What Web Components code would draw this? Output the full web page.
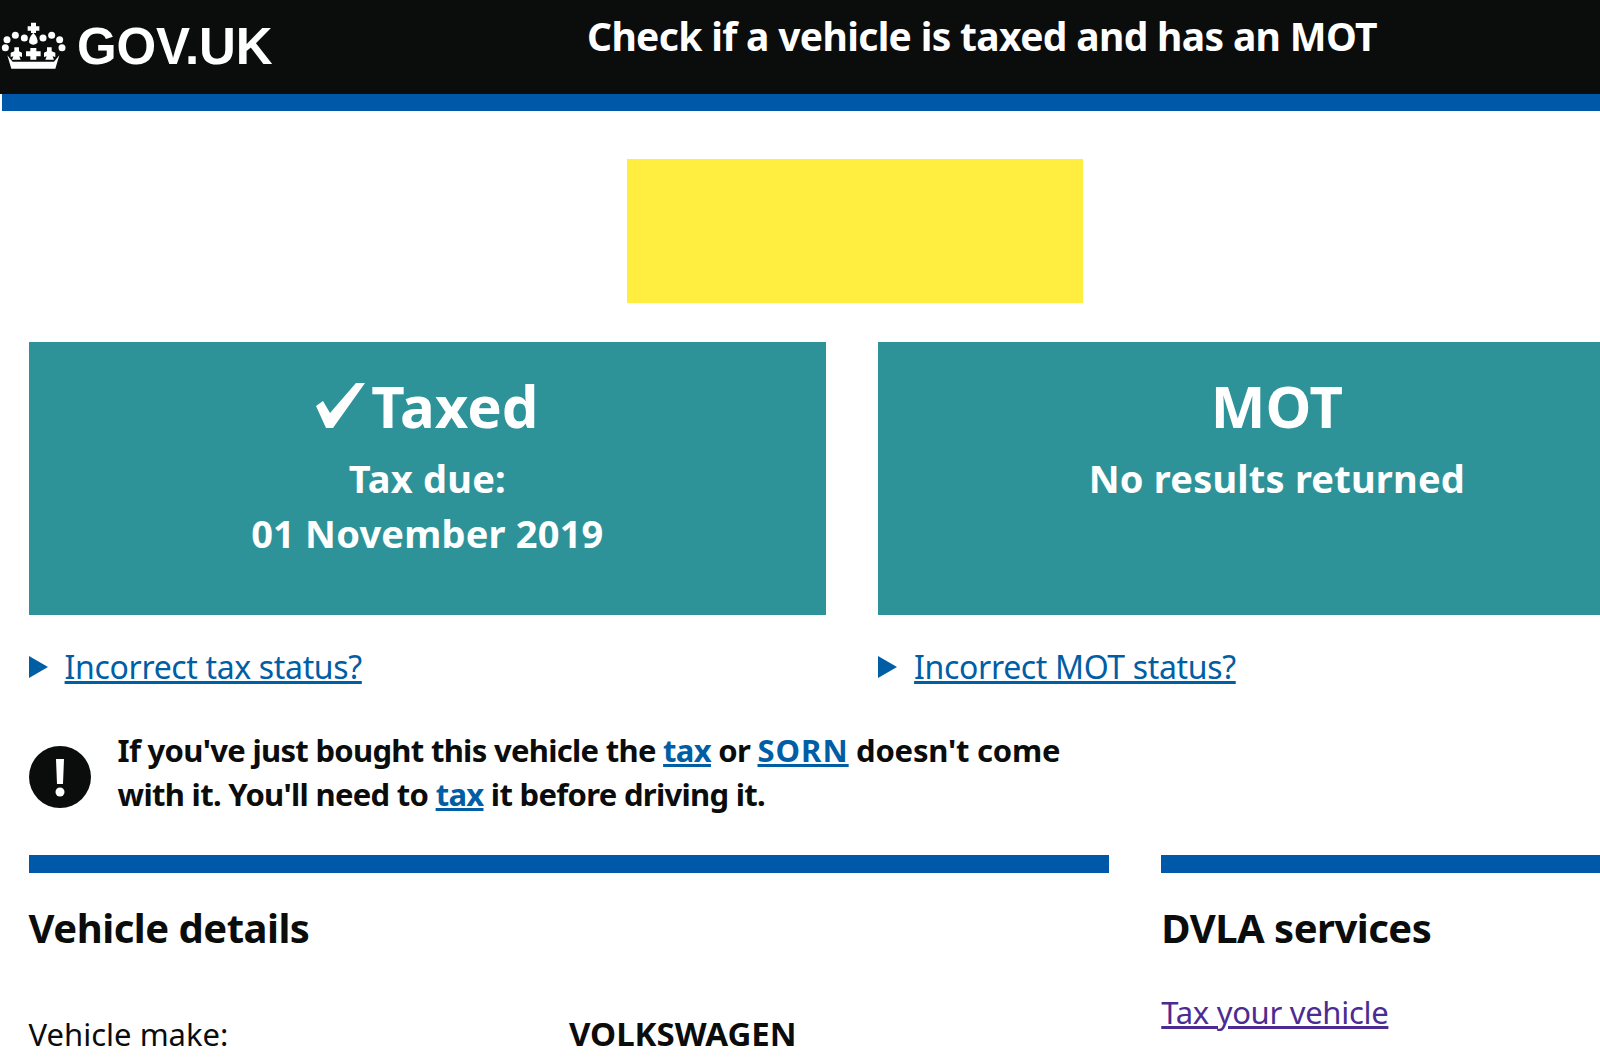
<!DOCTYPE html>
<html lang="en">
<head>
<meta charset="utf-8">
<title>Check if a vehicle is taxed and has an MOT</title>
<style>
  html, body { margin: 0; padding: 0; background: #fff; overflow: hidden; }
  body { font-family: "Noto Sans", Arial, sans-serif; color: #0b0c0c; }
  warning-note a { color: #005ea5; }
  warning-note a.caps { letter-spacing: 1px; }
</style>
</head>
<body>
<gov-header service="Check if a vehicle is taxed and has an MOT"></gov-header>
<vehicle-page>
  <number-plate slot="plate"></number-plate>

  <status-panel slot="status" heading="Taxed" checked link="Incorrect tax status?">
    <div>Tax due:</div>
    <div>01 November 2019</div>
  </status-panel>
  <status-panel slot="status" heading="MOT" link="Incorrect MOT status?">
    <div>No results returned</div>
  </status-panel>

  <warning-note slot="warning">
    If you've just bought this vehicle the <a href="#">tax</a> or <a class="caps" href="#">SORN</a> <span style="letter-spacing:-0.2px">doesn't come</span><br>
    with it. You'll need to <a href="#">tax</a> it before driving it.
  </warning-note>

  <info-section slot="details" heading="Vehicle details">
    <detail-row label="Vehicle make:" value="VOLKSWAGEN"></detail-row>
  </info-section>
  <info-section slot="services" heading="DVLA services">
    <service-link>Tax your vehicle</service-link>
  </info-section>
</vehicle-page>

<script>
class GovHeader extends HTMLElement {
  constructor() {
    super();
    const shadowRoot = this.attachShadow({mode: 'open'});
    shadowRoot.innerHTML = `
      <style>
        :host { display: block; }
        .bar {
          display: grid;
          grid-template-columns: 587px 1fr;
          height: 94px;
          background: #0b0c0c;
          color: #fff;
        }
        .logo { display: flex; align-items: center; height: 94px; }
        .logo svg { display: block; width: 77px; height: 70px; flex: none; margin-top: -1px; }
        .word {
          font: 700 51px/1 "Liberation Sans", Arial, sans-serif;
          letter-spacing: -0.2px;
          margin-top: -1px;
        }
        .service {
          font: 700 39px/50px "Noto Sans", Arial, sans-serif;
          letter-spacing: -0.66px;
          padding-top: 11px;
          white-space: nowrap;
        }
        .rule { height: 17px; margin-left: 2px; background: #0059a8; }
      </style>
      <div class="bar">
        <div class="logo">
          <svg viewBox="0 0 231 210" fill="#fff" aria-hidden="true">
            <circle cx="46" cy="70" r="10.5"/><circle cx="73" cy="78" r="10.5"/>
            <circle cx="129" cy="78" r="10.5"/><circle cx="155" cy="70" r="10.5"/>
            <circle cx="21" cy="83" r="10.5"/><circle cx="179" cy="83" r="10.5"/>
            <circle cx="16" cy="107" r="10.5"/><circle cx="186" cy="107" r="10.5"/>
            <path d="M93 32h15v11h10v13h-10v7h-15v-7h-10v-13h10z"/>
            <path d="M100 62q16 18 12 31q-12 10 -24 0q-4 -13 12 -31z"/>
            <path d="M91 108h18v10h13v15h-13v10h-18v-10h-13v-15h13z"/>
            <path d="M43 106h14v12l9 4v13l-8 -2 4 10h-26l4 -10 -8 2v-13l11 -4z"/>
            <path d="M141 106h14v12l11 4v13l-8 -2 4 10h-26l4 -10 -8 2v-13l9 -4z"/>
            <path d="M22 130l16 19h124l16 -19 -12 40h-132z"/>
          </svg>
          <span class="word">GOV.UK</span>
        </div>
        <div class="service"></div>
      </div>
      <div class="rule"></div>
    `;
  }
  connectedCallback() {
    this.shadowRoot.querySelector('.service').textContent = this.getAttribute('service');
  }
}

class VehiclePage extends HTMLElement {
  constructor() {
    super();
    const shadowRoot = this.attachShadow({mode: 'open'});
    shadowRoot.innerHTML = `
      <style>
        :host { display: block; width: 1647px; padding-left: 28.6px; }
        .plate { display: flex; justify-content: center; padding: 48px 0 39px 6px; }
        .status { display: grid; grid-template-columns: 1fr 1fr; column-gap: 52px; }
        .lower { display: grid; grid-template-columns: repeat(3, 1fr); column-gap: 52px; margin-top: 39px; }
        .details { grid-column: span 2; }
      </style>
      <div class="plate"><slot name="plate"></slot></div>
      <div class="status"><slot name="status"></slot></div>
      <div><slot name="warning"></slot></div>
      <div class="lower">
        <div class="details"><slot name="details"></slot></div>
        <div><slot name="services"></slot></div>
      </div>
    `;
  }
}

class NumberPlate extends HTMLElement {
  constructor() {
    super();
    const shadowRoot = this.attachShadow({mode: 'open'});
    shadowRoot.innerHTML = `
      <style>
        :host { display: block; width: 456px; height: 144px; background: #ffed3f; }
      </style>
    `;
  }
}

class StatusPanel extends HTMLElement {
  constructor() {
    super();
    const shadowRoot = this.attachShadow({mode: 'open'});
    shadowRoot.innerHTML = `
      <style>
        :host { display: block; }
        .panel {
          height: 273px;
          box-sizing: border-box;
          padding-top: 25px;
          background: #2e9399;
          color: #fff;
          text-align: center;
        }
        h2 {
          display: flex;
          justify-content: center;
          align-items: center;
          gap: 6px;
          margin: 0;
          height: 78px;
          font: 700 58px/78px "Noto Sans", Arial, sans-serif;
        }
        h2 svg { width: 49px; height: 46px; flex: none; margin-top: -1px; }
        .body {
          font: 700 38px/55px "Noto Sans", Arial, sans-serif;
          letter-spacing: 0.2px;
          margin-top: 6px;
        }
        .more {
          display: flex;
          align-items: center;
          margin-top: 35px;
          height: 34px;
          color: #005ea5;
          font: 400 32px/34px "Noto Sans", Arial, sans-serif;
          letter-spacing: -0.35px;
        }
        .more svg { width: 19px; height: 22px; flex: none; margin-right: 17px; }
        .more a { color: inherit; }
      </style>
      <div class="panel">
        <h2><span class="heading"></span></h2>
        <div class="body"><slot></slot></div>
      </div>
      <div class="more">
        <svg viewBox="0 0 19 22" fill="#005ea5" aria-hidden="true"><path d="M0 0l19 11-19 11z"/></svg>
        <a href="#"></a>
      </div>
    `;
  }
  connectedCallback() {
    const root = this.shadowRoot;
    root.querySelector('.heading').textContent = this.getAttribute('heading');
    root.querySelector('.more a').textContent = this.getAttribute('link');
    if (this.hasAttribute('checked')) {
      root.querySelector('h2').insertAdjacentHTML('afterbegin',
        '<svg viewBox="0 0 49 46" fill="#fff" aria-hidden="true"><path d="M0 23l7-5 7 12 26-30h9l-32 45h-7z"/></svg>');
    }
  }
}

class WarningNote extends HTMLElement {
  constructor() {
    super();
    const shadowRoot = this.attachShadow({mode: 'open'});
    shadowRoot.innerHTML = `
      <style>
        :host {
          display: flex;
          align-items: flex-start;
          gap: 27px;
          margin-top: 44px;
          font: 700 31px/44px "Noto Sans", Arial, sans-serif;
          letter-spacing: -0.7px;
          color: #0b0c0c;
        }
        svg { width: 62px; height: 62px; flex: none; margin-top: 18px; }
      </style>
      <svg viewBox="0 0 62 62" aria-hidden="true">
        <circle cx="31" cy="31" r="31" fill="#0b0c0c"/>
        <path d="M27 13h8l-1 25h-6z" fill="#fff"/>
        <circle cx="31" cy="46" r="4.5" fill="#fff"/>
      </svg>
      <div><slot></slot></div>
    `;
  }
}

class InfoSection extends HTMLElement {
  constructor() {
    super();
    const shadowRoot = this.attachShadow({mode: 'open'});
    shadowRoot.innerHTML = `
      <style>
        :host { display: block; border-top: 18px solid #0059a8; }
        h3 {
          margin: 29px 0 0;
          font: 700 40px/52px "Noto Sans", Arial, sans-serif;
          letter-spacing: -0.5px;
          color: #0b0c0c;
        }
      </style>
      <h3></h3>
      <slot></slot>
    `;
  }
  connectedCallback() {
    this.shadowRoot.querySelector('h3').textContent = this.getAttribute('heading');
  }
}

class DetailRow extends HTMLElement {
  constructor() {
    super();
    const shadowRoot = this.attachShadow({mode: 'open'});
    shadowRoot.innerHTML = `
      <style>
        :host {
          display: grid;
          grid-template-columns: 1fr 1fr;
          margin-top: 58px;
          font: 400 31px/44px "Noto Sans", Arial, sans-serif;
          color: #0b0c0c;
        }
        b { font-weight: 700; font-size: 33px; }
      </style>
      <span class="label"></span><b class="value"></b>
    `;
  }
  connectedCallback() {
    this.shadowRoot.querySelector('.label').textContent = this.getAttribute('label');
    this.shadowRoot.querySelector('.value').textContent = this.getAttribute('value');
  }
}

class ServiceLink extends HTMLElement {
  constructor() {
    super();
    const shadowRoot = this.attachShadow({mode: 'open'});
    shadowRoot.innerHTML = `
      <style>
        :host {
          display: block;
          margin-top: 36px;
          font: 400 31px/44px "Noto Sans", Arial, sans-serif;
          letter-spacing: -0.3px;
        }
        a { color: #4c2c92; }
      </style>
      <a href="#"><slot></slot></a>
    `;
  }
}

customElements.define('gov-header', GovHeader);
customElements.define('vehicle-page', VehiclePage);
customElements.define('number-plate', NumberPlate);
customElements.define('status-panel', StatusPanel);
customElements.define('warning-note', WarningNote);
customElements.define('info-section', InfoSection);
customElements.define('detail-row', DetailRow);
customElements.define('service-link', ServiceLink);
</script>
</body>
</html>
